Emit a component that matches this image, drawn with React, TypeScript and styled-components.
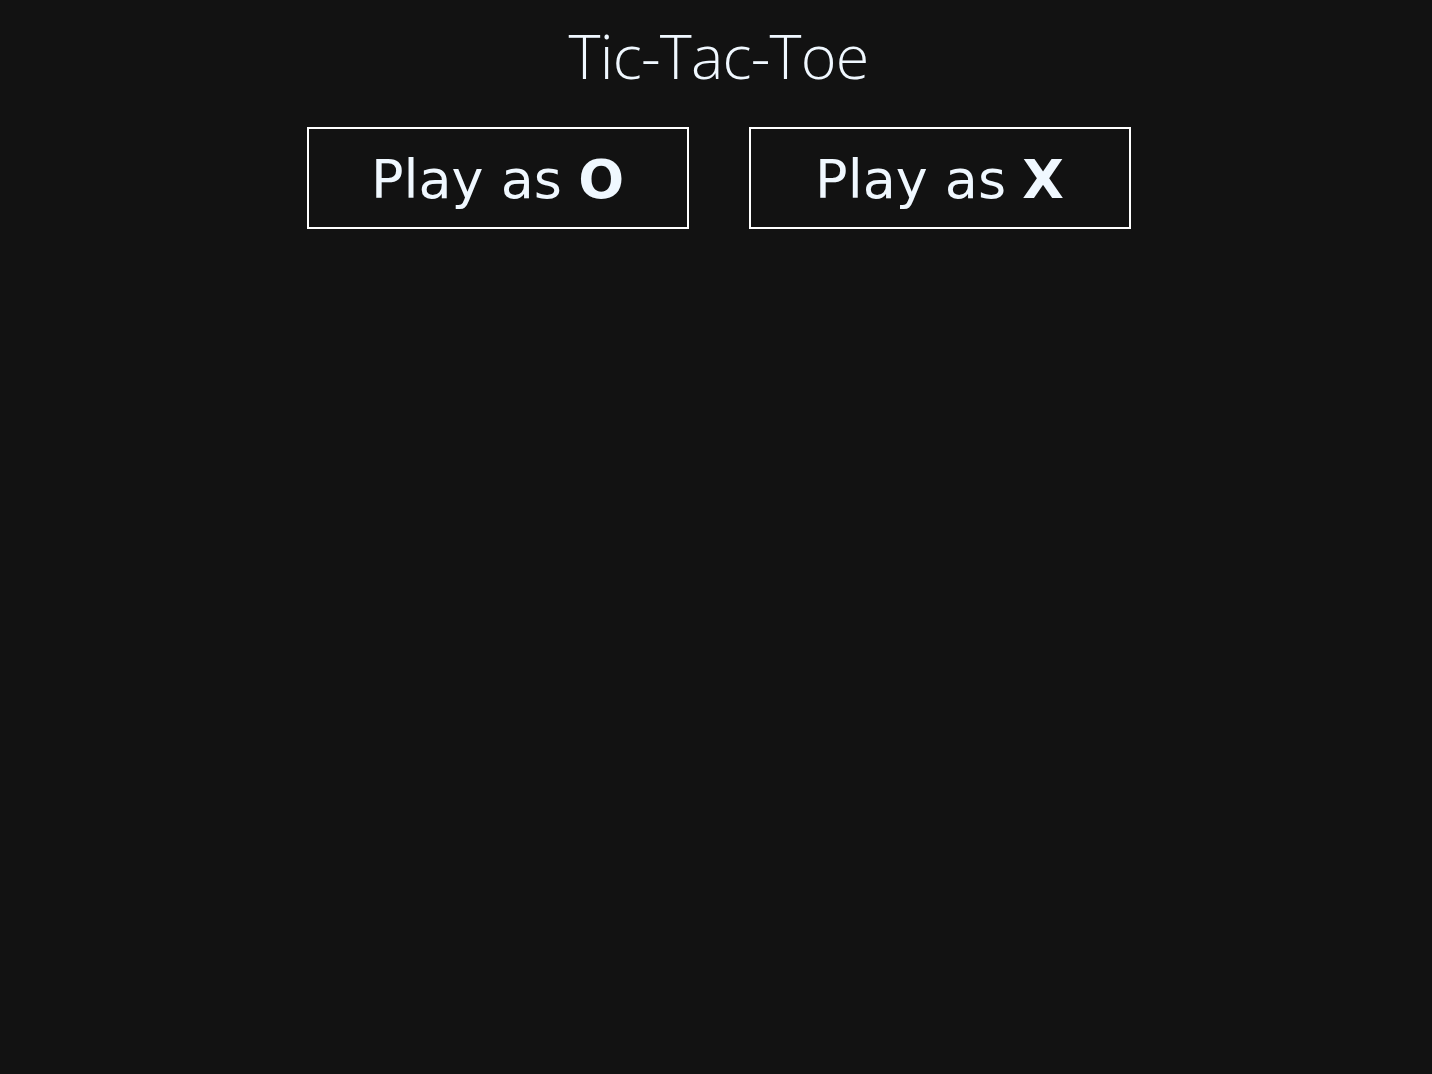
import React from "react";
import styled, { createGlobalStyle } from "styled-components";

const Global = createGlobalStyle`
  html, body { margin: 0; padding: 0; background: #121212; }
  body { font-family: "DejaVu Sans", Verdana, sans-serif; color: aliceblue; }
`;

const Page = styled.main`
  min-height: 100vh;
  display: flex;
  flex-direction: column;
  align-items: center;
  padding: 16px 0 0 5px;
  box-sizing: border-box;
`;

const Title = styled.h1`
  margin: 0;
  font-family: "Open Sans", "Noto Sans", sans-serif;
  font-weight: 300;
  font-size: 61px;
  line-height: 80px;
  color: aliceblue;
  letter-spacing: -0.8px;
`;

const Choices = styled.div`
  display: flex;
  gap: 60px;
  margin-top: 31px;
`;

const ChoiceButton = styled.button`
  width: 382px;
  height: 102px;
  background: transparent;
  border: 2px solid #ffffff;
  color: aliceblue;
  font-family: "DejaVu Sans", Verdana, sans-serif;
  font-size: 54px;
  line-height: 1;
  padding: 4px 0 0;
  display: flex;
  align-items: center;
  justify-content: center;
  cursor: pointer;
`;

const Mark = styled.b`
  font-weight: 700;
  margin-left: 0.3em;
`;

export default function App() {
  return (
    <>
      <Global />
      <Page>
        <Title>Tic-Tac-Toe</Title>
        <Choices>
          <ChoiceButton>Play as<Mark>O</Mark></ChoiceButton>
          <ChoiceButton>Play as<Mark>X</Mark></ChoiceButton>
        </Choices>
      </Page>
    </>
  );
}
